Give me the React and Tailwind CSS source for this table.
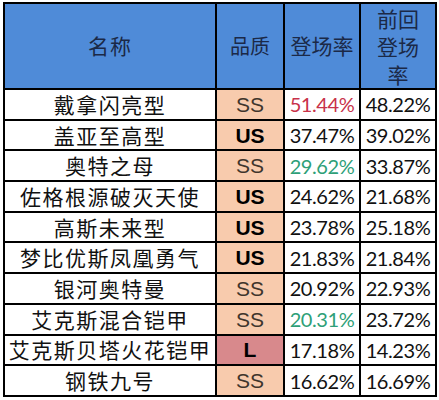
import React from 'react';

const rows = [
  { name: '戴拿闪亮型', q: 'SS', rate: '51.44%', prev: '48.22%', tone: 'red' },
  { name: '盖亚至高型', q: 'US', rate: '37.47%', prev: '39.02%' },
  { name: '奥特之母', q: 'SS', rate: '29.62%', prev: '33.87%', tone: 'green' },
  { name: '佐格根源破灭天使', q: 'US', rate: '24.62%', prev: '21.68%' },
  { name: '高斯未来型', q: 'US', rate: '23.78%', prev: '25.18%' },
  { name: '梦比优斯凤凰勇气', q: 'US', rate: '21.83%', prev: '21.84%' },
  { name: '银河奥特曼', q: 'SS', rate: '20.92%', prev: '22.93%' },
  { name: '艾克斯混合铠甲', q: 'SS', rate: '20.31%', prev: '23.72%', tone: 'green' },
  { name: '艾克斯贝塔火花铠甲', q: 'L', rate: '17.18%', prev: '14.23%' },
  { name: '钢铁九号', q: 'SS', rate: '16.62%', prev: '16.69%' },
];

const cjk = { fontFamily: '"Noto Sans CJK SC", "Noto Sans", sans-serif' };
const num = { fontFamily: 'Lato, "Liberation Sans", sans-serif' };
const arial = { fontFamily: '"Liberation Sans", Arial, sans-serif' };

const QualityCell = ({ q }) => {
  if (q === 'SS') {
    return (
      <td className="border-2 border-black bg-[#f8cbad] text-center text-[21px] leading-none text-[#3f352c]" style={arial}>
        SS
      </td>
    );
  }
  if (q === 'L') {
    return (
      <td className="border-2 border-black bg-[#d8898c] text-center text-[21px] leading-none font-bold text-black" style={arial}>
        L
      </td>
    );
  }
  return (
    <td className="border-2 border-black bg-[#f8cbad] text-center text-[21px] leading-none font-bold text-black" style={arial}>
      {q}
    </td>
  );
};

export default function App() {
  return (
    <div className="w-[439px] h-[400px] bg-white pt-[2px] pl-[3px]">
      <table className="table-fixed border-collapse border-2 border-black w-[432px]">
        <colgroup>
          <col className="w-[212px]" />
          <col className="w-[68px]" />
          <col className="w-[76px]" />
          <col className="w-[76px]" />
        </colgroup>
        <thead>
          <tr className="h-[86px] bg-[#4f8bd8] text-[#1b2947]" style={cjk}>
            <th className="border-2 border-black font-normal text-[21px] tracking-[1px]">名称</th>
            <th className="border-2 border-black font-normal text-[20px]">品质</th>
            <th className="border-2 border-black font-normal text-[21px]">登场率</th>
            <th className="border-2 border-black font-normal text-[21px] leading-[28px]">
              前回<br />登场<br />率
            </th>
          </tr>
        </thead>
        <tbody>
          {rows.map((r) => (
            <tr key={r.name} className="h-[30.7px]">
              <td className="border-2 border-black text-center text-[21px] leading-none tracking-[1.5px] text-[#111] whitespace-nowrap" style={cjk}>
                {r.name}
              </td>
              <QualityCell q={r.q} />
              <td
                className={`border-2 border-black text-center text-[20px] leading-none tracking-[-0.4px] ${
                  r.tone === 'red' ? 'text-[#c8324a]' : r.tone === 'green' ? 'text-[#2e9f78]' : 'text-[#111]'
                }`}
                style={num}
              >
                {r.rate}
              </td>
              <td className="border-2 border-black text-center text-[20px] leading-none tracking-[-0.4px] text-[#111]" style={num}>
                {r.prev}
              </td>
            </tr>
          ))}
        </tbody>
      </table>
    </div>
  );
}
